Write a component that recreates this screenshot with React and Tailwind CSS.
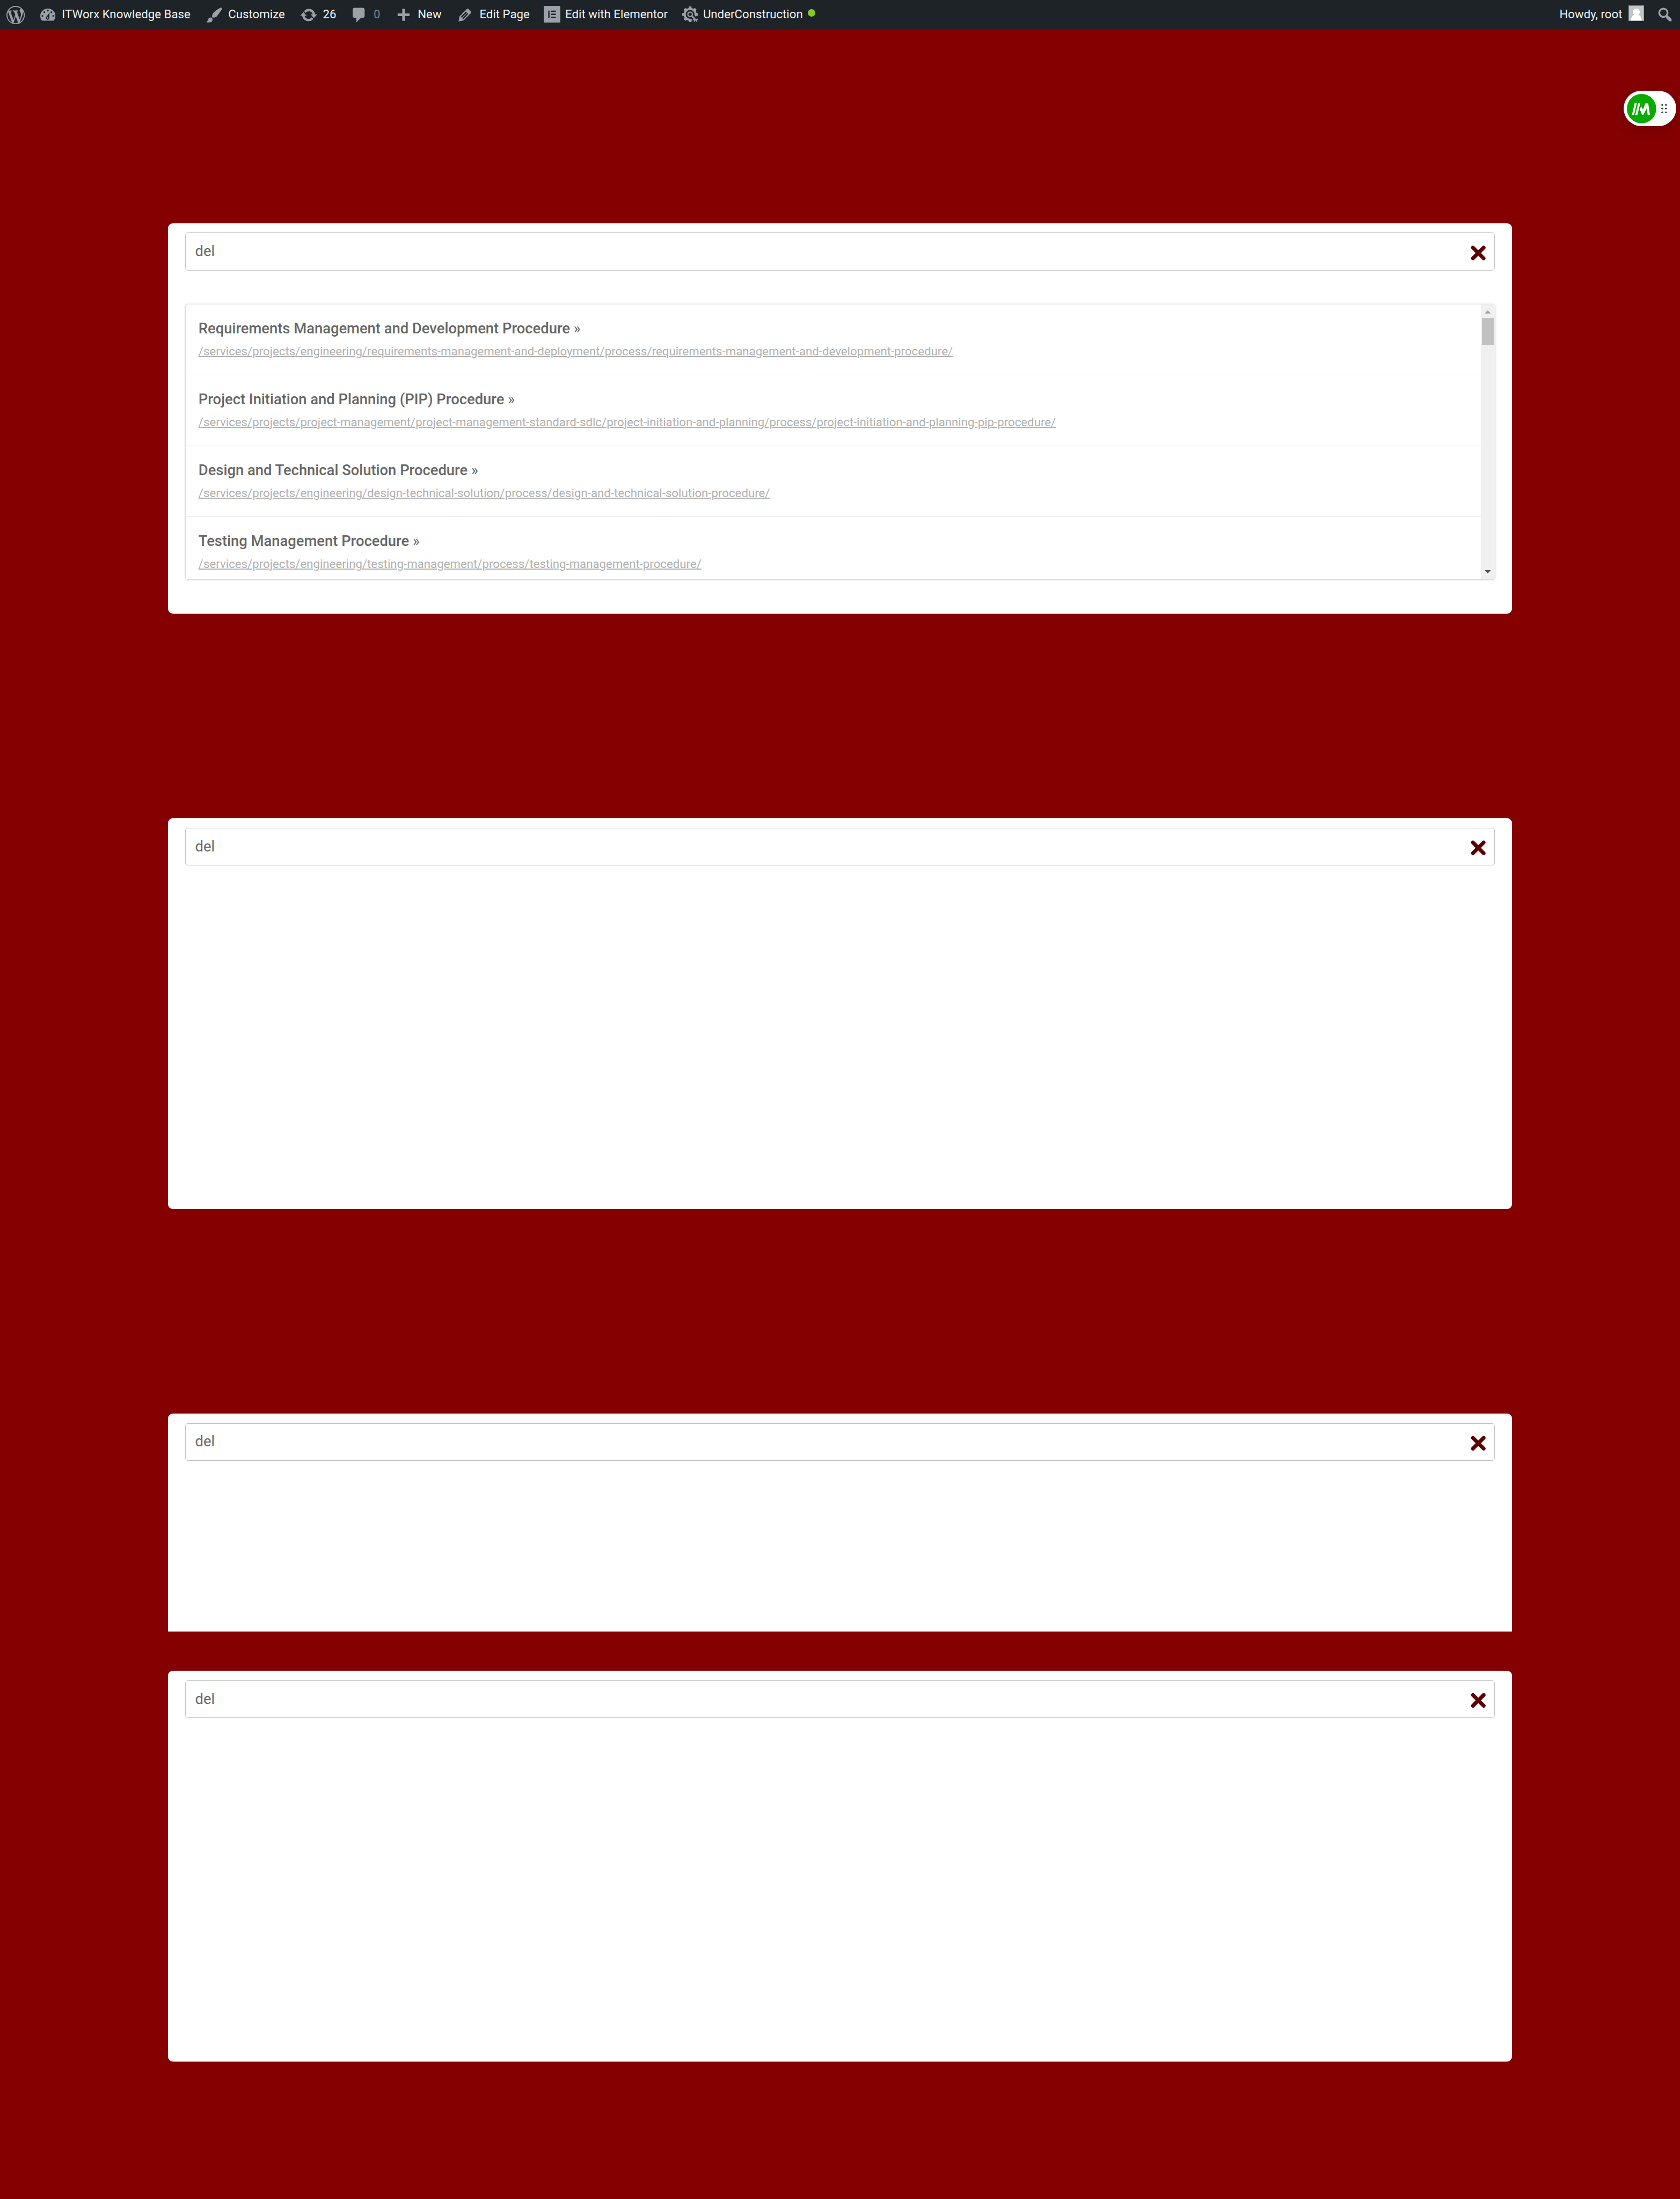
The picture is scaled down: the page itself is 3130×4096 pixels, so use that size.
const DASH = {
  wordpress:
    'M20 10c0-5.51-4.49-10-10-10C4.48 0 0 4.49 0 10c0 5.52 4.48 10 10 10 5.51 0 10-4.48 10-10zM7.78 15.37L4.37 6.22c.55-.02 1.17-.08 1.17-.08.5-.06.44-1.13-.06-1.11 0 0-1.45.11-2.37.11-.18 0-.37 0-.58-.01C4.12 2.69 6.87 1.11 10 1.11c2.33 0 4.45.87 6.05 2.34-.68-.11-1.65.39-1.65 1.58 0 .74.45 1.36.9 2.1.35.61.55 1.36.55 2.46 0 1.49-1.4 5-1.4 5l-3.03-8.37c.54-.02.82-.17.82-.17.5-.05.44-1.25-.06-1.22 0 0-1.44.12-2.38.12-.87 0-2.33-.12-2.33-.12-.5-.03-.56 1.2-.06 1.22l.92.08 1.26 3.41zM17.41 10c.24-.64.74-1.87.43-4.25.7 1.29 1.05 2.71 1.05 4.25 0 3.29-1.73 6.24-4.4 7.78.97-2.59 1.94-5.2 2.92-7.78zM6.1 18.09C3.12 16.65 1.11 13.53 1.11 10c0-1.3.23-2.48.72-3.59C3.25 10.3 4.67 14.2 6.1 18.09zm4.03-6.63l2.58 6.98c-.86.29-1.76.45-2.71.45-.79 0-1.57-.11-2.29-.33.81-2.38 1.62-4.74 2.42-7.1z',
  brush:
    'M18.33 3.57s.27-.8-.31-1.36c-.53-.52-1.22-.24-1.22-.24-.61.3-5.76 3.47-7.67 5.57-.86.96-2.06 3.79-1.09 4.82.92.98 3.96-.17 4.79-1 2.06-2.06 5.21-7.17 5.5-7.79zM1.4 17.65c2.37-1.56 1.46-3.41 3.23-4.64.93-.65 2.22-.62 3.08.29.63.67.8 2.57-.16 3.46-1.57 1.45-4 1.55-6.15.89z',
  update:
    'M10.2 3.28c3.53 0 6.43 2.61 6.92 6h2.08l-3.5 4-3.5-4h2.32c-.45-1.97-2.21-3.45-4.32-3.45-1.45 0-2.73.71-3.54 1.78L4.95 5.66C6.23 4.2 8.11 3.28 10.2 3.28zm-.4 13.44c-3.52 0-6.43-2.61-6.92-6H.8l3.5-4c1.17 1.33 2.33 2.67 3.5 4H5.48c.45 1.97 2.21 3.45 4.32 3.45 1.45 0 2.73-.71 3.54-1.78l1.71 1.95c-1.28 1.46-3.15 2.38-5.25 2.38z',
  comment: 'M5 2h9c1.1 0 2 .9 2 2v7c0 1.1-.9 2-2 2h-2l-5 5v-5H5c-1.1 0-2-.9-2-2V4c0-1.1.9-2 2-2z',
  plus: 'M17 7v3h-5v5H9v-5H4V7h5V2h3v5h5z',
  edit: 'M13.89 3.39l2.71 2.72c.46.46.42 1.24.03 1.64l-8.01 8.02-5.56 1.16 1.16-5.58s7.6-7.63 7.99-8.03c.39-.39 1.22-.39 1.68.07zm-2.73 2.79l-5.59 5.61 1.11 1.11 5.54-5.65zm-2.97 8.23l5.58-5.6-1.07-1.08-5.59 5.6z',
  search:
    'M12.14 4.18c1.87 1.87 2.11 4.75.72 6.89.12.1.22.21.36.31.2.16.47.36.81.59.34.24.56.39.66.47.42.31.73.57.94.78.32.32.6.65.84 1 .25.35.44.69.59 1.04.14.35.21.68.18 1-.02.32-.14.59-.36.81s-.49.34-.81.36c-.31.02-.65-.04-.99-.19-.35-.14-.7-.34-1.04-.59-.35-.24-.68-.52-1-.84-.21-.21-.47-.52-.77-.93-.1-.13-.25-.35-.47-.66-.22-.32-.4-.57-.56-.78-.16-.2-.29-.35-.44-.5-2.07 1.09-4.69.76-6.44-.98-2.14-2.15-2.14-5.64 0-7.78 2.15-2.15 5.63-2.15 7.78 0zm-1.41 6.36c1.36-1.37 1.36-3.58 0-4.95-1.37-1.37-3.59-1.37-4.95 0-1.37 1.37-1.37 3.58 0 4.95 1.36 1.37 3.58 1.37 4.95 0z',
};

function Dash({ name, className = '' }) {
  return (
    <svg viewBox="0 0 20 20" className={`size-[34.2px] shrink-0 fill-[#9ca1a7] ${className}`}>
      <path d={DASH[name]} />
    </svg>
  );
}

function Gauge() {
  return (
    <svg viewBox="0 0 20 20" className="mt-[10.8px] size-[34.2px] shrink-0 fill-[#9ca1a7]">
      <path d="M3.6 16.1h12.8c1.2-1.4 1.85-3.1 1.85-5.1 0-4.7-3.7-8.1-8.25-8.1S1.75 6.3 1.75 11c0 2 .65 3.7 1.85 5.1z" />
      <g className="fill-[#1d2327]">
        <circle cx="10" cy="5.1" r="1" />
        <circle cx="6.1" cy="6.9" r="1" />
        <circle cx="13.9" cy="6.9" r="1" />
        <circle cx="4.1" cy="10.9" r="1" />
        <circle cx="15.9" cy="10.9" r="1" />
        <path d="M11.9 7.2l-.2 5.7a1.95 1.95 0 1 1-2.9-1.5z" />
      </g>
      <circle cx="9.8" cy="13" r=".8" />
    </svg>
  );
}

function Elementor() {
  return (
    <svg viewBox="0 0 32 32" className="mt-[10.8px] size-[31.3px] shrink-0">
      <rect width="32" height="32" rx="1.5" fill="#9ca1a7" />
      <path d="M8.6 9h2.5v14H8.6zM14.2 9H23v2.5h-8.8zM14.2 14.8H23v2.5h-8.8zM14.2 20.5H23V23h-8.8z" fill="#1d2327" />
    </svg>
  );
}

function Gear() {
  const teeth = [0, 45, 90, 180, 225, 270, 315];
  return (
    <svg viewBox="0 0 30 30" className="mt-[11.7px] size-[29.5px] shrink-0">
      <g fill="#9ca1a7">
        {teeth.map((a) => (
          <path key={a} d="M11.8 5l.9-5h4.6l.9 5z" transform={`rotate(${a} 15 15)`} />
        ))}
      </g>
      <circle cx="15" cy="15" r="10.3" fill="none" stroke="#9ca1a7" strokeWidth="4" />
      <path d="M17 17L29 29" stroke="#1d2327" strokeWidth="9" />
      <circle cx="15" cy="14.8" r="4.3" fill="none" stroke="#9ca1a7" strokeWidth="2.3" />
      <path d="M17.8 17.8L28.2 28.2" stroke="#9ca1a7" strokeWidth="2.6" />
      <path
        d="M22.5 19.5a3.800 3.800 0 0 0 6.800 3.800M20.500 23.500a3.800 3.800 0 0 1 2 5.500"
        fill="none"
        stroke="#9ca1a7"
        strokeWidth="2"
      />
    </svg>
  );
}

function AdminBar() {
  return (
    <header className="flex h-[54.8px] items-start bg-[#1d2327] text-[22.24px] leading-[53px] whitespace-nowrap text-[#f0f0f1]">
      <div className="ml-[11.7px] w-[60.4px]">
        <Dash name="wordpress" className="mt-[10.8px]" />
      </div>
      <div className="flex w-[309.6px] gap-[9.1px]">
        <Gauge />
        <span>ITWorx Knowledge Base</span>
      </div>
      <div className="flex w-[176.2px] gap-[9.5px]">
        <Dash name="brush" className="mt-[10.6px]" />
        <span>Customize</span>
      </div>
      <div className="flex w-[94px] gap-[9.4px]">
        <Dash name="update" className="mt-[10.6px]" />
        <span>26</span>
      </div>
      <div className="flex w-[82.4px] gap-[10px]">
        <Dash name="comment" className="mt-[11.4px]" />
        <span className="text-[#7d8185]">0</span>
      </div>
      <div className="flex w-[115px] gap-[9.8px]">
        <Dash name="plus" className="mt-[13.4px]" />
        <span>New</span>
      </div>
      <div className="flex w-[163.7px] gap-[10px]">
        <Dash name="edit" className="mt-[10.6px]" />
        <span>Edit Page</span>
      </div>
      <div className="flex w-[258.1px] gap-[8.8px]">
        <Elementor />
        <span>Edit with Elementor</span>
      </div>
      <div className="flex">
        <Gear />
        <span className="ml-[9.4px]">UnderConstruction</span>
        <span className="mt-[17.1px] ml-[8.9px] size-[13.9px] rounded-full bg-[#87c926]" />
      </div>
      <div className="mr-[10.7px] ml-auto flex">
        <span>Howdy, root</span>
        <svg viewBox="0 0 30 30" className="mt-[9.8px] ml-[11.7px] size-[29.3px]">
          <rect x=".5" y=".5" width="29" height="29" fill="#c3c3c3" stroke="#8c8f94" />
          <circle cx="15" cy="12.5" r="6.6" fill="#fff" />
          <path d="M4.5 29c.4-6 4-10.5 7.5-11.5h6c3.5 1 7.1 5.500 7.500 11.500z" fill="#fff" />
        </svg>
        <Dash name="search" className="mt-[10.4px] ml-[21.7px]" />
      </div>
    </header>
  );
}

function SearchField() {
  return (
    <div className="mx-[32.3px] flex h-[70.4px] items-center justify-between rounded-[5px] border border-[#c2c2c2] bg-white pr-[15px] pl-[17.2px]">
      <span className="text-[27.38px] leading-[37px] text-[#666]">del</span>
      <svg viewBox="0 0 29 29" className="mt-[5px] size-[28.4px] fill-none stroke-[#5a0000]">
        <path d="M4.3 4.3l20.400 20.400M24.700 4.3L4.3 24.700" strokeWidth="7.2" strokeLinecap="round" />
      </svg>
    </div>
  );
}

const RESULTS = [
  ['Requirements Management and Development Procedure', '/services/projects/engineering/requirements-management-and-deployment/process/requirements-management-and-development-procedure/'],
  ['Project Initiation and Planning (PIP) Procedure', '/services/projects/project-management/project-management-standard-sdlc/project-initiation-and-planning/process/project-initiation-and-planning-pip-procedure/'],
  ['Design and Technical Solution Procedure', '/services/projects/engineering/design-technical-solution/process/design-and-technical-solution-procedure/'],
  ['Testing Management Procedure', '/services/projects/engineering/testing-management/process/testing-management-procedure/'],
];

function Results() {
  return (
    <div className="mx-[31.5px] mt-[62.2px] flex h-[514px] overflow-hidden rounded-[5px] border border-[#dcdcdc] shadow-[0_0_4px_rgba(0,0,0,0.12)]">
      <ul className="flex-1">
        {RESULTS.map(([title, url]) => (
          <li key={url} className="h-[132px] border-b border-[#e5e5e5] pt-[25.2px] pl-[24.3px] whitespace-nowrap">
            <div className="text-[27.38px] leading-[40px] font-medium text-[#666]">
              {title} <span className="font-normal">»</span>
            </div>
            <div className="mt-[5.8px] text-[22.24px] leading-[32px] text-[#b1b1b1] underline decoration-2">{url}</div>
          </li>
        ))}
      </ul>
      <div className="flex w-[25.4px] flex-col items-center bg-[#f0f0f0]">
        <svg viewBox="0 0 12 6" className="mt-[10.8px] h-[6px] w-[11.7px]">
          <path d="M0 6L6 0l6 6z" fill="#a3a3a3" />
        </svg>
        <div className="mt-[8.7px] h-[50.8px] w-[21.5px] bg-[#c1c1c1]" />
        <svg viewBox="0 0 12 6" className="mt-auto mb-[10.8px] h-[6px] w-[11.7px]">
          <path d="M0 0l6 6 6-6z" fill="#505050" />
        </svg>
      </div>
    </div>
  );
}

function Card({ className, children }) {
  return (
    <section className={`w-[2504px] bg-white pt-[17.6px] ${className}`}>
      <SearchField />
      {children}
    </section>
  );
}

function FloatingPill() {
  return (
    <div className="absolute top-[169.2px] left-[3025.3px] flex h-[65.5px] w-[97.8px] items-center rounded-full bg-white pl-[5.9px] shadow-[0_4px_24px_rgba(0,0,0,0.2)]">
      <svg viewBox="600 537 168 168" className="size-[54.8px] overflow-visible">
        <circle cx="684" cy="621" r="84" fill="#0aab00" />
        <path
          d="M645 588h12l-16 69h-12zM665 588h12l-17 69h-12zM675 627l6-22 11 21 14-35h16l10 66h-13l-5-38-20 38h-7z"
          fill="#fff"
        />
      </svg>
      <svg viewBox="0 0 11 17" className="ml-[9.4px] h-[16.6px] w-[10.8px] fill-[#3a3f4a]">
        {[1.5, 8.5, 15.5].map((y) => (
          <g key={y}>
            <ellipse cx="2" cy={y} rx="2" ry="1.5" />
            <ellipse cx="9" cy={y} rx="2" ry="1.5" />
          </g>
        ))}
      </svg>
    </div>
  );
}

export default function App() {
  return (
    <div className="relative h-[4096px] w-[3130px] overflow-hidden bg-[#850000] font-['Roboto',sans-serif]">
      <AdminBar />
      <main className="flex flex-col items-center pt-[360.8px]">
        <Card className="h-[727.5px] rounded-[9px]">
          <Results />
        </Card>
        <Card className="mt-[381.3px] h-[727.5px] rounded-[9px]" />
        <Card className="mt-[381.3px] h-[405.8px] rounded-t-[9px]" />
        <Card className="mt-[73.3px] h-[727.5px] rounded-[9px]" />
      </main>
      <FloatingPill />
    </div>
  );
}
